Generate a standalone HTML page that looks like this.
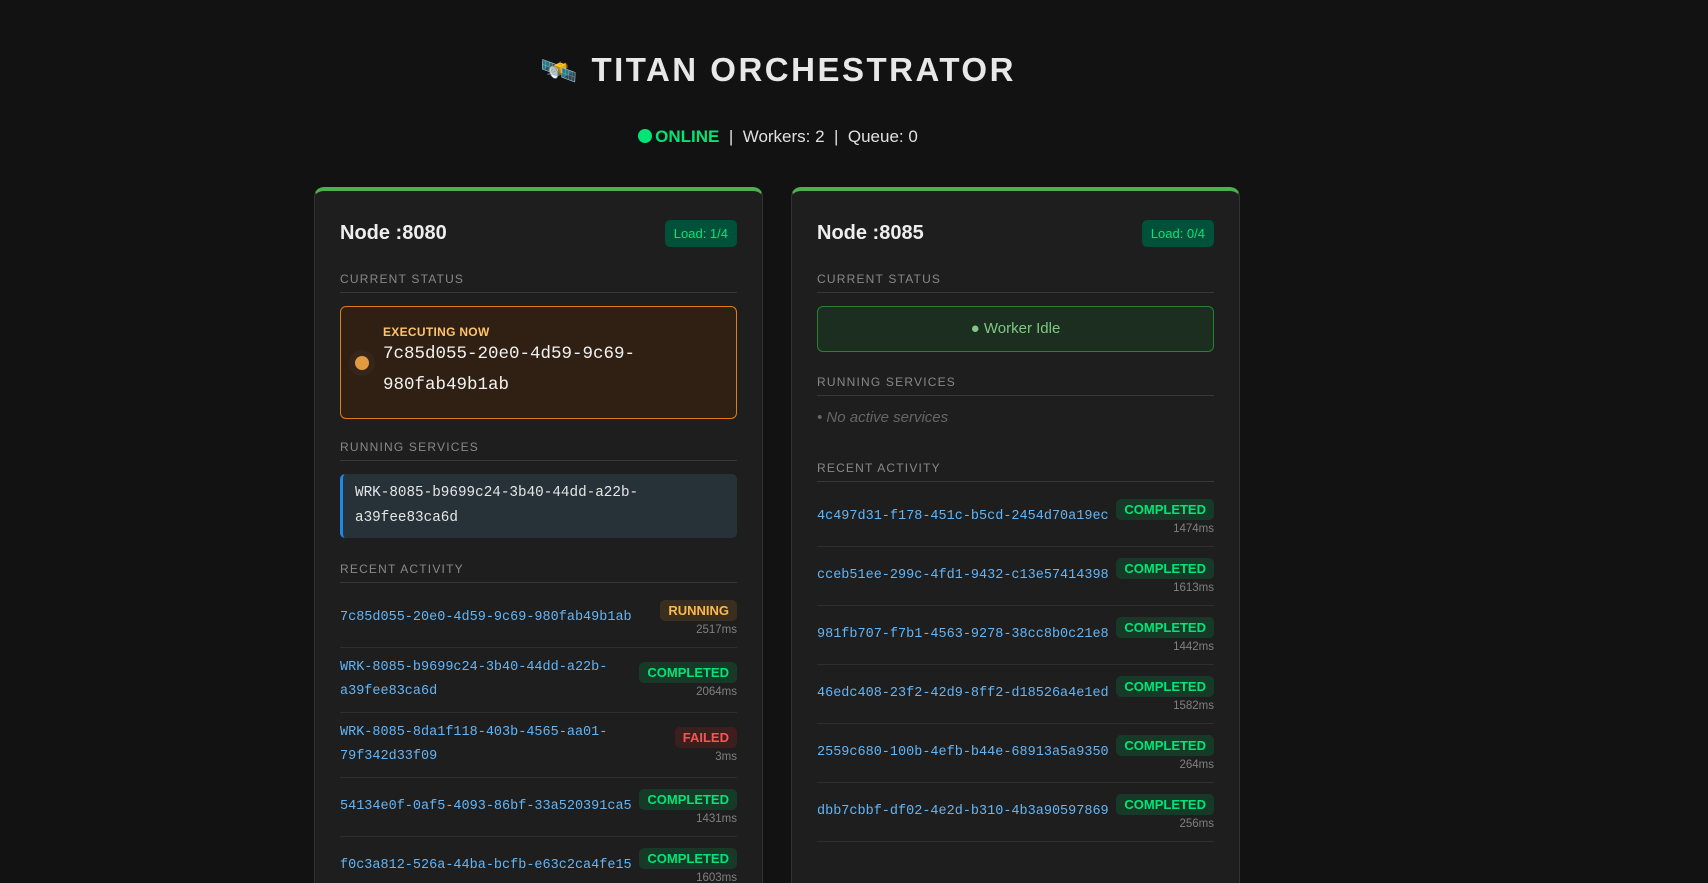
<!DOCTYPE html>
<html><head><meta charset="utf-8"><style>
*{box-sizing:border-box;margin:0;padding:0}
html{width:1708px;height:883px;overflow:hidden}
body{width:1708px;height:883px;overflow:hidden;background:#121212;color:#e0e0e0;font-family:"Liberation Sans",sans-serif;position:relative}
h1{position:absolute;top:51px;left:0;width:1556px;text-align:center;font-size:33px;letter-spacing:2.5px;font-weight:bold;color:#e8e8e8}
h1 .em{font-size:30px;margin-right:14px;letter-spacing:0}
.stat{position:absolute;top:127px;left:0;width:1556px;text-align:center;font-size:17px;color:#e0e0e0}
.stat .on{color:#00e676;font-weight:bold}
.stat .dot{display:inline-block;width:14px;height:14px;border-radius:50%;background:#00e676;vertical-align:-1px;margin-right:3px}
.card{position:absolute;top:187px;width:449px;height:710px;background:#1e1e1e;border:1px solid #333;border-top:4px solid #4caf50;border-radius:10px 10px 0 0;padding:23px 25px;overflow:hidden}
.hd{display:flex;justify-content:space-between;align-items:center;height:38px;margin-bottom:20px}
.hd b{font-size:20px;color:#eee}
.load{background:#00513a;color:#00e676;font-size:13px;padding:6px 9px;border-radius:5px}
.lbl{font-size:12px;letter-spacing:1.2px;color:#888;padding-bottom:6px;border-bottom:1px solid #383838;margin-bottom:13px}
.exec{height:113px;border:1px solid #e07b1a;background:#2f2013;border-radius:6px;display:flex;align-items:center;padding:0 16px 0 14px;margin-bottom:21px}
.exec .d{width:14px;height:14px;border-radius:50%;background:#e39b3f;box-shadow:0 0 0 6px #36251a;margin-right:14px;flex:none}
.exec .t{font-size:12px;font-weight:bold;color:#ffc36b;letter-spacing:.3px}
.exec .id{font-family:"Liberation Mono",monospace;font-size:17.5px;line-height:31px;color:#f2f2f2}
.svc{background:#263238;border-left:3px solid #1e88e5;border-radius:5px;padding:7px 12px;font-family:"Liberation Mono",monospace;font-size:14.3px;line-height:25px;color:#e6e6e6;margin-bottom:24px}
.list{margin-top:6px}
.row{display:flex;justify-content:space-between;align-items:center;border-bottom:1px solid #2e2e2e;padding:8px 0;min-height:59px}
.row .i{font-family:"Liberation Mono",monospace;font-size:13.5px;line-height:24px;color:#64b5f6;white-space:nowrap}
.r{text-align:right;flex:none}
.b{display:inline-block;font-size:13px;font-weight:bold;padding:3px 8px;border-radius:5px}
.c{background:#173a28;color:#00e676}.ru{background:#3a2e1f;color:#ffb74d}.f{background:#3b1e1e;color:#ff5252}
.ms{font-size:11.5px;color:#808080;margin-top:3px}
.idle{height:46px;border:1px solid #2e7d32;background:#1b2e1f;border-radius:6px;text-align:center;line-height:44px;color:#81c784;font-size:15px;margin-bottom:23px}
.none{font-style:italic;color:#666;font-size:15px;margin:3px 0 35px}
</style></head><body>
<h1><span class="em">🛰️</span>TITAN ORCHESTRATOR</h1>
<div class="stat"><span class="dot"></span><span class="on">ONLINE</span> &nbsp;| &nbsp;Workers: 2 &nbsp;| &nbsp;Queue: 0</div>

<div class="card" style="left:314px">
<div class="hd"><b>Node :8080</b><span class="load">Load: 1/4</span></div>
<div class="lbl">CURRENT STATUS</div>
<div class="exec"><span class="d"></span><div><div class="t">EXECUTING NOW</div><div class="id">7c85d055-20e0-4d59-9c69-<br>980fab49b1ab</div></div></div>
<div class="lbl">RUNNING SERVICES</div>
<div class="svc">WRK-8085-b9699c24-3b40-44dd-a22b-<br>a39fee83ca6d</div>
<div class="lbl" style="margin-bottom:0">RECENT ACTIVITY</div>
<div class="list">
<div class="row"><div class="i">7c85d055-20e0-4d59-9c69-980fab49b1ab</div><div class="r"><span class="b ru">RUNNING</span><div class="ms">2517ms</div></div></div>
<div class="row"><div class="i">WRK-8085-b9699c24-3b40-44dd-a22b-<br>a39fee83ca6d</div><div class="r"><span class="b c">COMPLETED</span><div class="ms">2064ms</div></div></div>
<div class="row"><div class="i">WRK-8085-8da1f118-403b-4565-aa01-<br>79f342d33f09</div><div class="r"><span class="b f">FAILED</span><div class="ms">3ms</div></div></div>
<div class="row"><div class="i">54134e0f-0af5-4093-86bf-33a520391ca5</div><div class="r"><span class="b c">COMPLETED</span><div class="ms">1431ms</div></div></div>
<div class="row"><div class="i">f0c3a812-526a-44ba-bcfb-e63c2ca4fe15</div><div class="r"><span class="b c">COMPLETED</span><div class="ms">1603ms</div></div></div>
</div>
</div>

<div class="card" style="left:791px">
<div class="hd"><b>Node :8085</b><span class="load">Load: 0/4</span></div>
<div class="lbl">CURRENT STATUS</div>
<div class="idle">● Worker Idle</div>
<div class="lbl">RUNNING SERVICES</div>
<div class="none">• No active services</div>
<div class="lbl" style="margin-bottom:0">RECENT ACTIVITY</div>
<div class="list">
<div class="row"><div class="i">4c497d31-f178-451c-b5cd-2454d70a19ec</div><div class="r"><span class="b c">COMPLETED</span><div class="ms">1474ms</div></div></div>
<div class="row"><div class="i">cceb51ee-299c-4fd1-9432-c13e57414398</div><div class="r"><span class="b c">COMPLETED</span><div class="ms">1613ms</div></div></div>
<div class="row"><div class="i">981fb707-f7b1-4563-9278-38cc8b0c21e8</div><div class="r"><span class="b c">COMPLETED</span><div class="ms">1442ms</div></div></div>
<div class="row"><div class="i">46edc408-23f2-42d9-8ff2-d18526a4e1ed</div><div class="r"><span class="b c">COMPLETED</span><div class="ms">1582ms</div></div></div>
<div class="row"><div class="i">2559c680-100b-4efb-b44e-68913a5a9350</div><div class="r"><span class="b c">COMPLETED</span><div class="ms">264ms</div></div></div>
<div class="row"><div class="i">dbb7cbbf-df02-4e2d-b310-4b3a90597869</div><div class="r"><span class="b c">COMPLETED</span><div class="ms">256ms</div></div></div>
</div>
</div>
</body></html>
